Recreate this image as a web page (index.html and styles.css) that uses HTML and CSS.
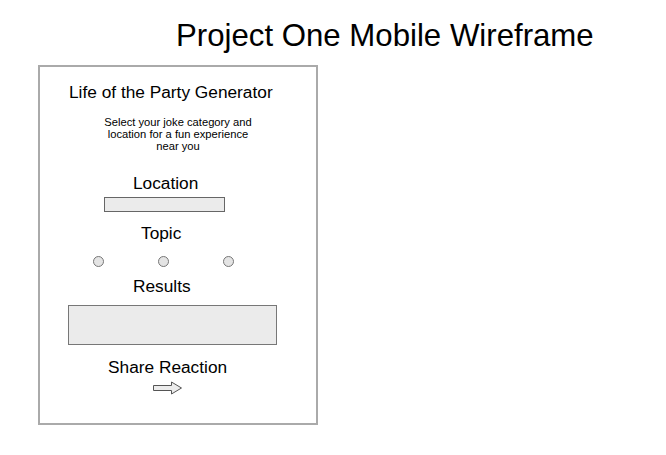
FILE: index.html
```html
<!DOCTYPE html>
<html>
<head>
<meta charset="utf-8">
<title>Project One Mobile Wireframe</title>
<link rel="stylesheet" href="styles.css">
</head>
<body>
<div class="page">
  <h1 class="page-title">Project One Mobile Wireframe</h1>
  <div class="phone">
    <h2 class="app-title">Life of the Party Generator</h2>
    <p class="app-sub">Select your joke category and<br>location for a fun experience<br>near you</p>
    <div class="label label-location">Location</div>
    <div class="input"></div>
    <div class="label label-topic">Topic</div>
    <div class="radios">
      <span class="radio"></span>
      <span class="radio"></span>
      <span class="radio"></span>
    </div>
    <div class="label label-results">Results</div>
    <div class="results"></div>
    <div class="label label-share">Share Reaction</div>
    <svg class="arrow" width="30" height="14" viewBox="0 0 30 14">
      <path d="M0.5 4.5 H18.5 V1 L28.5 7 L18.5 13 V9.5 H0.5 Z" fill="#ececec" stroke="#555" stroke-width="1"/>
    </svg>
  </div>
</div>
</body>
</html>
```

FILE: styles.css
```css
* { box-sizing: border-box; }
html, body { margin: 0; padding: 0; background: #fff; }
body { font-family: "Liberation Sans", Arial, sans-serif; color: #000; }

.page {
  padding-top: 18px;
  display: flex;
  flex-direction: column;
  align-items: flex-start;
}

.page-title {
  margin: 0 0 11px 176px;
  font-size: 31.2px;
  line-height: 36px;
  font-weight: normal;
}

.phone {
  margin-left: 38px;
  width: 280px;
  height: 360px;
  border: 2px solid #aaaaaa;
  padding-top: 15px;
  display: flex;
  flex-direction: column;
  align-items: flex-start;
}

.app-title {
  margin: 0 0 0 29px;
  font-size: 17.3px;
  line-height: 20px;
  font-weight: normal;
}

.app-sub {
  align-self: stretch;
  margin: 13.5px 0 0 0;
  font-size: 11.2px;
  line-height: 12.2px;
  text-align: center;
}

.label {
  font-size: 17.3px;
  line-height: 20px;
}

.label-location { margin: 21px 0 0 93px; }
.label-topic { margin: 11px 0 0 101px; }
.label-results { margin: 9px 0 0 93px; }
.label-share { margin: 12px 0 0 68px; }

.input {
  margin: 4px 0 0 64px;
  width: 121px;
  height: 15px;
  background: #ebebeb;
  border: 1px solid #666;
}

.radios {
  margin: 13px 0 0 53px;
  display: flex;
  gap: 54px;
}

.radio {
  width: 11px;
  height: 11px;
  border-radius: 50%;
  background: #e4e4e4;
  border: 1px solid #777;
}

.results {
  margin: 9px 0 0 28px;
  width: 209px;
  height: 40px;
  background: #ebebeb;
  border: 1px solid #777;
}

.arrow {
  margin: 4px 0 0 113px;
  display: block;
}
```
